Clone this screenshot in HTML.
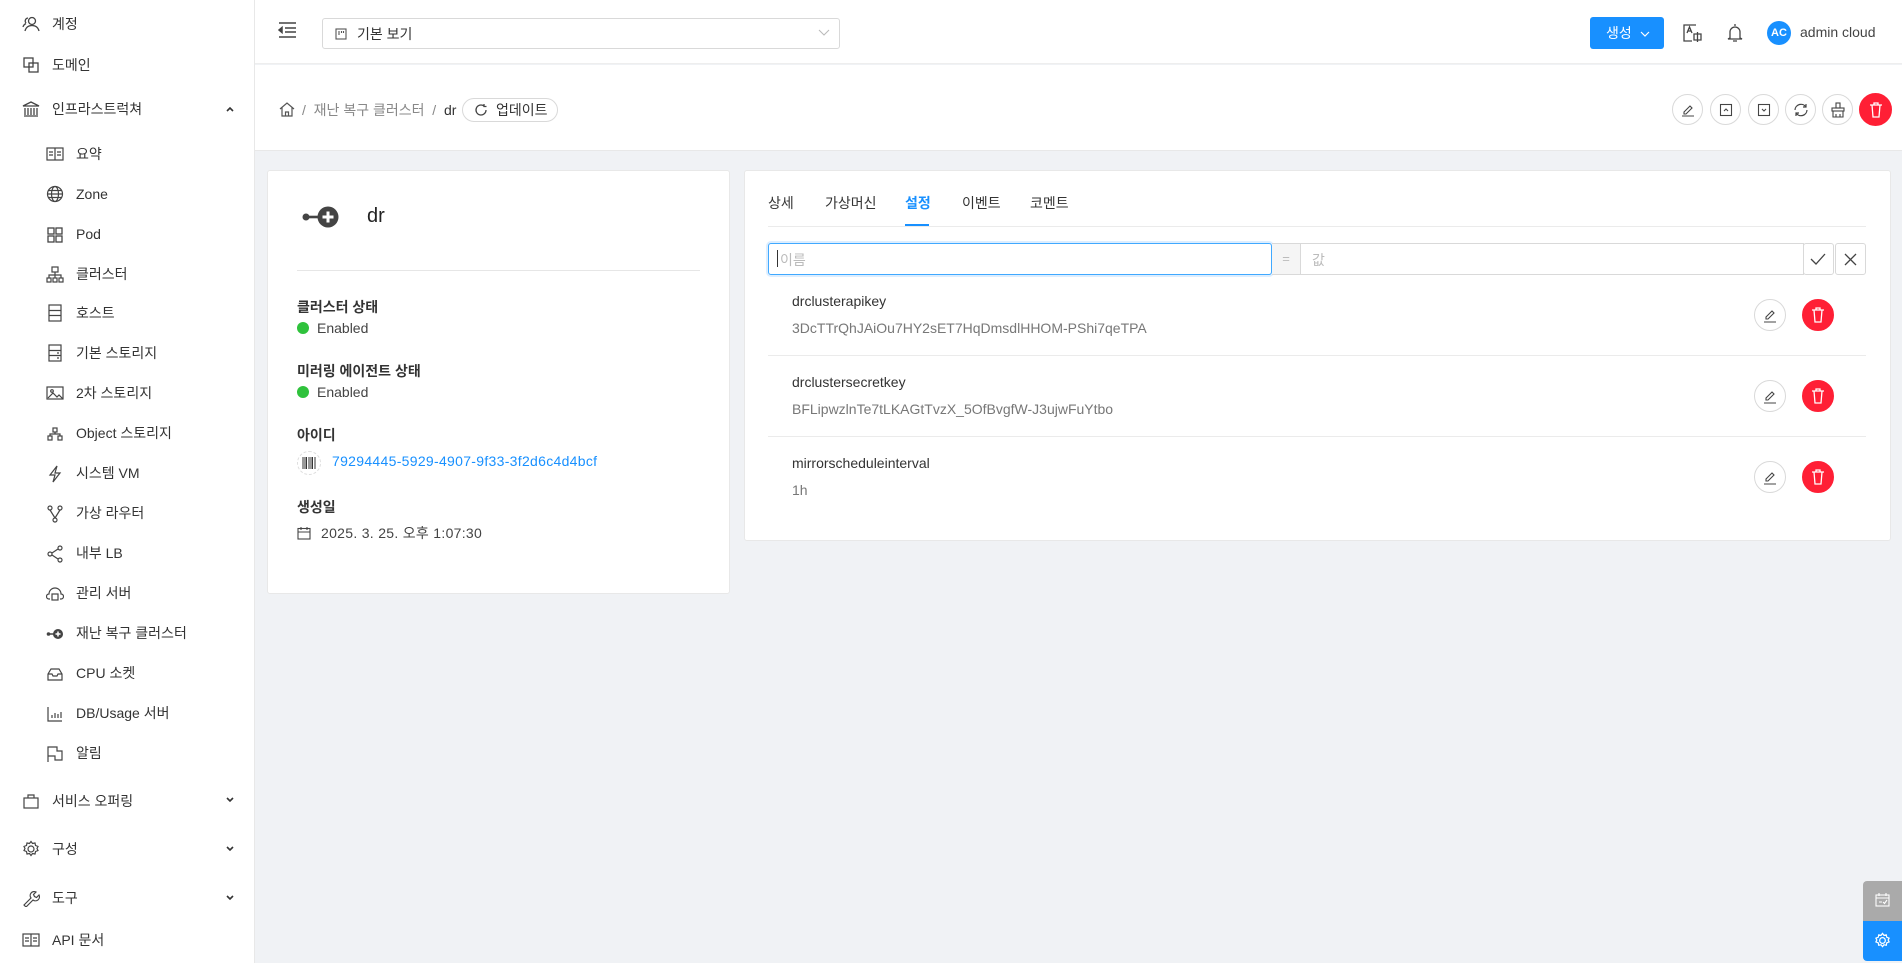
<!DOCTYPE html>
<html><head><meta charset="utf-8"><style>
*{box-sizing:border-box;margin:0;padding:0}
body{width:1902px;height:963px;overflow:hidden;background:#f0f2f5;font-family:"Liberation Sans","Noto Sans CJK KR",sans-serif;color:#333;font-size:14px;position:relative}
.a{position:absolute}
.side{left:0;top:0;width:255px;height:963px;background:#fff;border-right:1px solid #e8e8e8}
.si{position:absolute;font-size:14px;color:#333;white-space:nowrap;line-height:20px}
.si svg{position:absolute;top:1px}
.hdr{left:255px;top:0;width:1647px;height:64px;background:#fff;border-bottom:1px solid #eee}
.bc{left:255px;top:65px;width:1647px;height:86px;background:#fff;border-bottom:1px solid #e8e8e8}
.card{background:#fff;border:1px solid #e8e8e8;border-radius:3px}
.cb{position:absolute;width:31px;height:31px;border-radius:50%;border:1px solid #d9d9d9;background:#fff;display:flex;align-items:center;justify-content:center}
.red{background:#ff1f35;border-color:#ff1f35}
.lbl{position:absolute;left:297px;font-weight:bold;font-size:14px;color:#333}
.dot{display:inline-block;width:12px;height:12px;border-radius:50%;background:#2fc23c;margin-right:8px;vertical-align:-1px}
.tab{position:absolute;top:193px;font-size:14px;color:#333}
.key{position:absolute;left:792px;font-size:14px;color:#333}
.val{position:absolute;left:792px;font-size:14px;color:#777}
.sep{position:absolute;left:768px;width:1098px;height:1px;background:#ebebeb}
</style></head><body>

<div class="a side">
<svg class="a" style="left:22px;top:15px" width="18" height="18" viewBox="0 0 18 18" fill="none" stroke="#444" stroke-width="1.3"><circle cx="10" cy="6" r="3.5"/><path d="M3 16c1-4 4-5.5 7-5.5s6 1.5 7 5.5M6 3a3 3 0 0 0-2 5M1 12c.5-2 2-3 3-3.5"/></svg>
<div class="si" style="left:52px;top:14px">계정</div>
<svg class="a" style="left:22px;top:56px" width="18" height="18" viewBox="0 0 18 18" fill="none" stroke="#444" stroke-width="1.3"><rect x="2" y="2" width="9" height="9"/><rect x="7" y="7" width="9" height="9"/></svg>
<div class="si" style="left:52px;top:55px">도메인</div>
<svg class="a" style="left:22px;top:100px" width="18" height="18" viewBox="0 0 18 18" fill="none" stroke="#444" stroke-width="1.3"><path d="M1 6l8-4 8 4zM2 16h14M3 8v7M6 8v7M9 8v7M12 8v7M15 8v7"/></svg>
<div class="si" style="left:52px;top:99px">인프라스트럭쳐</div>
<svg class="a" style="left:225px;top:105px" width="10" height="8" viewBox="0 0 10 8"><path d="M2 6l3-3 3 3" fill="none" stroke="#333" stroke-width="1.6"/></svg>

<div class="si" style="left:76px;top:144px">요약</div>
<svg class="a" style="left:46px;top:146px" width="18" height="16" viewBox="0 0 18 16" fill="none" stroke="#444" stroke-width="1.2"><rect x="1" y="2" width="16" height="12"/><path d="M9 2v12M3 6h4M3 9h4M11 6h4M11 9h4"/></svg>
<div class="si" style="left:76px;top:184px">Zone</div>
<svg class="a" style="left:46px;top:185px" width="18" height="18" viewBox="0 0 18 18" fill="none" stroke="#444" stroke-width="1.2"><circle cx="9" cy="9" r="7.5"/><ellipse cx="9" cy="9" rx="3.5" ry="7.5"/><path d="M1.5 9h15M2.5 5.5h13M2.5 12.5h13"/></svg>
<div class="si" style="left:76px;top:224px">Pod</div>
<svg class="a" style="left:46px;top:226px" width="18" height="18" viewBox="0 0 18 18" fill="none" stroke="#444" stroke-width="1.3"><rect x="2" y="2" width="6" height="6"/><rect x="10" y="2" width="6" height="6"/><rect x="2" y="10" width="6" height="6"/><rect x="10" y="10" width="6" height="6"/></svg>
<div class="si" style="left:76px;top:264px">클러스터</div>
<svg class="a" style="left:46px;top:266px" width="18" height="18" viewBox="0 0 18 18" fill="none" stroke="#444" stroke-width="1.2"><rect x="6" y="1" width="6" height="5"/><rect x="1" y="12" width="4" height="4"/><rect x="7" y="12" width="4" height="4"/><rect x="13" y="12" width="4" height="4"/><path d="M9 6v6M3 12V9h12v3"/></svg>
<div class="si" style="left:76px;top:303px">호스트</div>
<svg class="a" style="left:46px;top:304px" width="18" height="18" viewBox="0 0 18 18" fill="none" stroke="#444" stroke-width="1.2"><rect x="3" y="1" width="12" height="16"/><path d="M3 6.5h12M3 11.5h12"/></svg>
<div class="si" style="left:76px;top:343px">기본 스토리지</div>
<svg class="a" style="left:46px;top:344px" width="18" height="18" viewBox="0 0 18 18" fill="none" stroke="#444" stroke-width="1.2"><rect x="3" y="1" width="12" height="16"/><path d="M3 6.5h12M3 11.5h12M11 9h2M11 14h2"/></svg>
<div class="si" style="left:76px;top:383px">2차 스토리지</div>
<svg class="a" style="left:46px;top:385px" width="18" height="16" viewBox="0 0 18 16" fill="none" stroke="#444" stroke-width="1.2"><rect x="1" y="2" width="16" height="12"/><path d="M2 13l5-5 4 4 2-2 4 4"/><circle cx="6" cy="6" r="1.3"/></svg>
<div class="si" style="left:76px;top:423px">Object 스토리지</div>
<svg class="a" style="left:46px;top:425px" width="18" height="18" viewBox="0 0 18 18" fill="none" stroke="#444" stroke-width="1.2"><rect x="7" y="3" width="4" height="4"/><rect x="2" y="11" width="4" height="4"/><rect x="12" y="11" width="4" height="4"/><path d="M9 7v2M4 11V9h10v2"/></svg>
<div class="si" style="left:76px;top:463px">시스템 VM</div>
<svg class="a" style="left:46px;top:465px" width="18" height="18" viewBox="0 0 18 18" fill="none" stroke="#444" stroke-width="1.2"><path d="M11 1L4 10h5l-2 7 7-9H9z"/></svg>
<div class="si" style="left:76px;top:503px">가상 라우터</div>
<svg class="a" style="left:46px;top:505px" width="18" height="18" viewBox="0 0 18 18" fill="none" stroke="#444" stroke-width="1.2"><circle cx="4" cy="3" r="2"/><circle cx="14" cy="3" r="2"/><circle cx="9" cy="15" r="2"/><path d="M4 5l5 8M14 5l-5 8"/></svg>
<div class="si" style="left:76px;top:543px">내부 LB</div>
<svg class="a" style="left:46px;top:545px" width="18" height="18" viewBox="0 0 18 18" fill="none" stroke="#444" stroke-width="1.2"><circle cx="4" cy="9" r="2"/><circle cx="14" cy="3" r="2"/><circle cx="14" cy="15" r="2"/><path d="M6 8l6-4M6 10l6 4"/></svg>
<div class="si" style="left:76px;top:583px">관리 서버</div>
<svg class="a" style="left:46px;top:585px" width="18" height="18" viewBox="0 0 18 18" fill="none" stroke="#444" stroke-width="1.2"><path d="M4 14H3a2 2 0 0 1 0-5 6 6 0 0 1 12 0 2 2 0 0 1 0 5h-1"/><rect x="6" y="9" width="6" height="6"/></svg>
<div class="si" style="left:76px;top:623px">재난 복구 클러스터</div>
<svg class="a" style="left:46px;top:626px" width="18" height="16" viewBox="0 0 18 16"><circle cx="2.5" cy="8" r="1.8" fill="#444"/><path d="M3 8h6" stroke="#444" stroke-width="1.5"/><circle cx="12" cy="8" r="5" fill="#444"/><path d="M12 5.5v5M9.5 8h5" stroke="#fff" stroke-width="1.5"/></svg>
<div class="si" style="left:76px;top:663px">CPU 소켓</div>
<svg class="a" style="left:46px;top:665px" width="18" height="18" viewBox="0 0 18 18" fill="none" stroke="#444" stroke-width="1.2"><path d="M2 9l3-5h8l3 5v6H2zM2 9h4l1 2h4l1-2h4"/></svg>
<div class="si" style="left:76px;top:703px">DB/Usage 서버</div>
<svg class="a" style="left:46px;top:705px" width="18" height="18" viewBox="0 0 18 18" fill="none" stroke="#444" stroke-width="1.2"><path d="M2 2v14h14M6 13v-3M9 13V8M12 13v-4M15 13V7"/></svg>
<div class="si" style="left:76px;top:743px">알림</div>
<svg class="a" style="left:46px;top:745px" width="18" height="18" viewBox="0 0 18 18" fill="none" stroke="#444" stroke-width="1.2"><path d="M2 17V2h9v4h5v9h-7v-4H2"/></svg>

<svg class="a" style="left:22px;top:792px" width="18" height="18" viewBox="0 0 18 18" fill="none" stroke="#444" stroke-width="1.2"><rect x="2" y="6" width="14" height="10"/><path d="M6 6V3h6v3"/></svg>
<div class="si" style="left:52px;top:791px">서비스 오퍼링</div>
<svg class="a" style="left:225px;top:796px" width="10" height="8" viewBox="0 0 10 8"><path d="M2 2l3 3 3-3" fill="none" stroke="#333" stroke-width="1.6"/></svg>
<svg class="a" style="left:22px;top:840px" width="18" height="18" viewBox="0 0 18 18" fill="none" stroke="#444" stroke-width="1.2"><circle cx="9" cy="9" r="3"/><path d="M9 1.5l1.5 2 2.5-.5.5 2.5 2.5 1-1 2 1 2-2.5 1-.5 2.5-2.5-.5-1.5 2-1.5-2-2.5.5-.5-2.5-2.5-1 1-2-1-2 2.5-1 .5-2.5 2.5.5z"/></svg>
<div class="si" style="left:52px;top:839px">구성</div>
<svg class="a" style="left:225px;top:845px" width="10" height="8" viewBox="0 0 10 8"><path d="M2 2l3 3 3-3" fill="none" stroke="#333" stroke-width="1.6"/></svg>
<svg class="a" style="left:22px;top:889px" width="18" height="18" viewBox="0 0 18 18" fill="none" stroke="#444" stroke-width="1.2"><path d="M2 16l7-7a4 4 0 0 1 5-6l-2.5 2.5 1 2 2 1L17 6a4 4 0 0 1-6 5l-7 7z"/></svg>
<div class="si" style="left:52px;top:888px">도구</div>
<svg class="a" style="left:225px;top:894px" width="10" height="8" viewBox="0 0 10 8"><path d="M2 2l3 3 3-3" fill="none" stroke="#333" stroke-width="1.6"/></svg>
<svg class="a" style="left:22px;top:932px" width="18" height="16" viewBox="0 0 18 16" fill="none" stroke="#444" stroke-width="1.2"><rect x="1" y="2" width="16" height="12"/><path d="M9 2v12M3 6h4M3 9h4M11 6h4M11 9h4"/></svg>
<div class="si" style="left:52px;top:930px">API 문서</div>
</div>

<div class="a hdr"></div>
<svg class="a" style="left:278px;top:21px" width="19" height="18" viewBox="0 0 19 18" fill="none" stroke="#444" stroke-width="1.5"><path d="M1 2h17M7 7h11M7 11h11M1 16h17"/><path d="M4 6.5L1 9l3 2.5z" fill="#444"/></svg>
<div class="a" style="left:322px;top:18px;width:518px;height:31px;border:1px solid #d9d9d9;border-radius:3px;background:#fff"></div>
<svg class="a" style="left:335px;top:28px" width="12" height="12" viewBox="0 0 12 12" fill="none" stroke="#555" stroke-width="1.1"><rect x="1" y="1" width="10" height="10"/><path d="M4 3v4M6.5 3v2M8.5 3v2"/></svg>
<div class="a" style="left:357px;top:24px;font-size:14px;color:#333">기본 보기</div>
<svg class="a" style="left:818px;top:29px" width="12" height="8" viewBox="0 0 12 8"><path d="M1 1l5 5 5-5" fill="none" stroke="#bbb" stroke-width="1.1"/></svg>
<div class="a" style="left:1590px;top:17px;width:74px;height:32px;background:#1890ff;border-radius:3px;color:#fff;font-size:14px;line-height:32px;padding-left:16px">생성 <svg width="10" height="8" viewBox="0 0 10 8" style="margin-left:4px"><path d="M1 2l4 4 4-4" fill="none" stroke="#fff" stroke-width="1.2"/></svg></div>
<svg class="a" style="left:1683px;top:24px" width="19" height="18" viewBox="0 0 19 18" fill="none" stroke="#444" stroke-width="1.3"><path d="M13 1H1v16h8"/><path d="M4 9l2.5-6L9 9M5 7h3"/><path d="M11 10h7v6h-7zM14.5 8v10"/></svg>
<svg class="a" style="left:1727px;top:23px" width="16" height="20" viewBox="0 0 16 20" fill="none" stroke="#444" stroke-width="1.3"><path d="M8 1v2M3 15V9a5 5 0 0 1 10 0v6l2 1H1zM6 18h4"/></svg>
<div class="a" style="left:1767px;top:21px;width:24px;height:24px;border-radius:50%;background:#1890ff;color:#fff;font-size:11px;font-weight:bold;line-height:24px;text-align:center">AC</div>
<div class="a" style="left:1800px;top:24px;font-size:14px;color:#444">admin cloud</div>

<div class="a bc"></div>
<svg class="a" style="left:279px;top:101px" width="16" height="16" viewBox="0 0 16 16" fill="none" stroke="#555" stroke-width="1.2"><path d="M1 8l7-6 7 6M3 6.5V15h10V6.5M6.5 15v-4h3v4"/></svg>
<div class="a" style="left:302px;top:100px;font-size:14px;color:#888">/&nbsp;&nbsp;재난 복구 클러스터&nbsp;&nbsp;/&nbsp;&nbsp;<span style="color:#333">dr</span></div>
<div class="a" style="left:462px;top:98px;width:96px;height:24px;border:1px solid #d9d9d9;border-radius:12px;font-size:14px;color:#333;line-height:22px;padding-left:33px">업데이트</div>
<svg class="a" style="left:474px;top:103px" width="14" height="14" viewBox="0 0 14 14" fill="none" stroke="#444" stroke-width="1.3"><path d="M12 7a5 5 0 1 1-2-4M10 1v2.5h2.5"/></svg>

<div class="cb" style="left:1672px;top:94px"><svg width="14" height="14" viewBox="0 0 14 14" fill="none" stroke="#444" stroke-width="1.1"><path d="M3 9l6-6 2 2-6 6H3zM1 13h12"/></svg></div>
<div class="cb" style="left:1710px;top:94px"><svg width="14" height="14" viewBox="0 0 14 14" fill="none" stroke="#444" stroke-width="1.1"><rect x="1.5" y="1.5" width="11" height="11"/><path d="M5 8l2-2 2 2"/></svg></div>
<div class="cb" style="left:1748px;top:94px"><svg width="14" height="14" viewBox="0 0 14 14" fill="none" stroke="#444" stroke-width="1.1"><rect x="1.5" y="1.5" width="11" height="11"/><path d="M5 6l2 2 2-2"/></svg></div>
<div class="cb" style="left:1785px;top:94px"><svg width="16" height="16" viewBox="0 0 16 16" fill="none" stroke="#444" stroke-width="1.2"><path d="M2 8a6 6 0 0 1 11-3M14 8a6 6 0 0 1-11 3M13 2v3h-3M3 14v-3h3"/></svg></div>
<div class="cb" style="left:1822px;top:94px"><svg width="16" height="16" viewBox="0 0 16 16" fill="none" stroke="#444" stroke-width="1.1"><rect x="6" y="1" width="4" height="5"/><rect x="2" y="6" width="12" height="3"/><path d="M3 9v6h10V9M6 12v3M10 12v3"/></svg></div>
<div class="cb red" style="left:1859px;top:93px;width:33px;height:33px"><svg width="14" height="16" viewBox="0 0 14 16" fill="none" stroke="#fff" stroke-width="1.3"><path d="M1 3h12M5 3V1h4v2M3 3l1 12h6l1-12"/></svg></div>

<div class="a card" style="left:267px;top:170px;width:463px;height:424px"></div>
<svg class="a" style="left:302px;top:205px" width="38" height="24" viewBox="0 0 38 24"><circle cx="4" cy="12" r="3.5" fill="#444"/><path d="M5 12h14" stroke="#444" stroke-width="2.6"/><circle cx="26" cy="12" r="10.5" fill="#444"/><path d="M26 6.5v11M20.5 12h11" stroke="#fff" stroke-width="3"/></svg>
<div class="a" style="left:367px;top:205px;font-size:20px;color:#222">dr</div>
<div class="a" style="left:297px;top:270px;width:403px;height:1px;background:#e6e6e6"></div>
<div class="lbl" style="top:297px">클러스터 상태</div>
<div class="a" style="left:297px;top:320px;font-size:14px;color:#444"><span class="dot"></span>Enabled</div>
<div class="lbl" style="top:361px">미러링 에이전트 상태</div>
<div class="a" style="left:297px;top:384px;font-size:14px;color:#444"><span class="dot"></span>Enabled</div>
<div class="lbl" style="top:425px">아이디</div>
<div class="a" style="left:297px;top:451px;width:24px;height:24px;border-radius:50%;border:1px dashed #ddd"></div>
<svg class="a" style="left:302px;top:457px" width="14" height="12" viewBox="0 0 14 12" stroke="#333"><path d="M1 0v12M3 0v12M4.5 0v12M7 0v12M9 0v12M10.5 0v12M13 0v12" stroke-width="1"/></svg>
<div class="a" style="left:332px;top:453px;font-size:14px;color:#1890ff;letter-spacing:.3px">79294445-5929-4907-9f33-3f2d6c4d4bcf</div>
<div class="lbl" style="top:497px">생성일</div>
<svg class="a" style="left:297px;top:526px" width="14" height="14" viewBox="0 0 14 14" fill="none" stroke="#444" stroke-width="1.1"><rect x="1" y="2.5" width="12" height="10.5"/><path d="M1 6h12M4 1v3M10 1v3"/></svg>
<div class="a" style="left:321px;top:523px;font-size:14px;color:#444;letter-spacing:.3px">2025. 3. 25. 오후 1:07:30</div>

<div class="a card" style="left:744px;top:170px;width:1147px;height:371px"></div>
<div class="tab" style="left:768px">상세</div>
<div class="tab" style="left:825px">가상머신</div>
<div class="tab" style="left:905px;color:#1890ff;font-weight:bold">설정</div>
<div class="tab" style="left:962px">이벤트</div>
<div class="tab" style="left:1030px">코멘트</div>
<div class="sep" style="top:226px"></div>
<div class="a" style="left:905px;top:224px;width:24px;height:2px;background:#1890ff"></div>

<div class="a" style="left:768px;top:243px;width:504px;height:32px;border:1px solid #40a9ff;border-radius:3px;box-shadow:0 0 0 2px rgba(24,144,255,.15);background:#fff"></div>
<div class="a" style="left:777px;top:250px;width:1px;height:17px;background:#333"></div>
<div class="a" style="left:780px;top:250px;font-size:14px;color:#bbb">이름</div>
<div class="a" style="left:1272px;top:243px;width:28px;height:32px;background:#f5f5f5;border-top:1px solid #d9d9d9;border-bottom:1px solid #d9d9d9;color:#bbb;text-align:center;line-height:30px;font-size:13px">=</div>
<div class="a" style="left:1300px;top:243px;width:504px;height:32px;border:1px solid #d9d9d9;background:#fff"></div>
<div class="a" style="left:1312px;top:250px;font-size:14px;color:#bbb">값</div>
<div class="a" style="left:1803px;top:243px;width:31px;height:32px;border:1px solid #d9d9d9;border-radius:3px;background:#fff"></div>
<svg class="a" style="left:1810px;top:252px" width="16" height="14" viewBox="0 0 16 14"><path d="M1 7l5 5 9-10" fill="none" stroke="#444" stroke-width="1.3"/></svg>
<div class="a" style="left:1835px;top:243px;width:31px;height:32px;border:1px solid #d9d9d9;border-radius:3px;background:#fff"></div>
<svg class="a" style="left:1844px;top:253px" width="13" height="13" viewBox="0 0 13 13"><path d="M1 1l11 11M12 1L1 12" stroke="#444" stroke-width="1.3"/></svg>

<div class="key" style="top:293px">drclusterapikey</div>
<div class="val" style="top:320px">3DcTTrQhJAiOu7HY2sET7HqDmsdlHHOM-PShi7qeTPA</div>
<div class="sep" style="top:355px"></div>
<div class="key" style="top:374px">drclustersecretkey</div>
<div class="val" style="top:401px">BFLipwzlnTe7tLKAGtTvzX_5OfBvgfW-J3ujwFuYtbo</div>
<div class="sep" style="top:436px"></div>
<div class="key" style="top:455px">mirrorscheduleinterval</div>
<div class="val" style="top:482px">1h</div>

<div class="cb" style="left:1754px;top:299px;width:32px;height:32px"><svg width="16" height="16" viewBox="0 0 16 16" fill="none" stroke="#444" stroke-width="1.1"><path d="M4 10l6-6 2 2-6 6H4zM2 15h12"/></svg></div>
<div class="cb red" style="left:1802px;top:299px;width:32px;height:32px"><svg width="14" height="16" viewBox="0 0 14 16" fill="none" stroke="#fff" stroke-width="1.3"><path d="M1 3h12M5 3V1h4v2M3 3l1 12h6l1-12"/></svg></div>
<div class="cb" style="left:1754px;top:380px;width:32px;height:32px"><svg width="16" height="16" viewBox="0 0 16 16" fill="none" stroke="#444" stroke-width="1.1"><path d="M4 10l6-6 2 2-6 6H4zM2 15h12"/></svg></div>
<div class="cb red" style="left:1802px;top:380px;width:32px;height:32px"><svg width="14" height="16" viewBox="0 0 14 16" fill="none" stroke="#fff" stroke-width="1.3"><path d="M1 3h12M5 3V1h4v2M3 3l1 12h6l1-12"/></svg></div>
<div class="cb" style="left:1754px;top:461px;width:32px;height:32px"><svg width="16" height="16" viewBox="0 0 16 16" fill="none" stroke="#444" stroke-width="1.1"><path d="M4 10l6-6 2 2-6 6H4zM2 15h12"/></svg></div>
<div class="cb red" style="left:1802px;top:461px;width:32px;height:32px"><svg width="14" height="16" viewBox="0 0 14 16" fill="none" stroke="#fff" stroke-width="1.3"><path d="M1 3h12M5 3V1h4v2M3 3l1 12h6l1-12"/></svg></div>

<div class="a" style="left:1863px;top:881px;width:39px;height:40px;background:#aaa;border-radius:4px 0 0 0"></div>
<svg class="a" style="left:1875px;top:893px" width="15" height="14" viewBox="0 0 15 14" fill="none" stroke="#fff" stroke-width="1.1"><rect x="1" y="2" width="13" height="11"/><path d="M1 5h13M4 0v3M11 0v3M4 9h3M8 9l1.5 1.5L12 7"/></svg>
<div class="a" style="left:1863px;top:921px;width:39px;height:40px;background:#1890ff;border-radius:0 0 0 4px"></div>
<svg class="a" style="left:1874px;top:932px" width="17" height="17" viewBox="0 0 18 18" fill="none" stroke="#fff" stroke-width="1.3"><circle cx="9" cy="9" r="3"/><path d="M9 1.5l1.5 2 2.5-.5.5 2.5 2.5 1-1 2 1 2-2.5 1-.5 2.5-2.5-.5-1.5 2-1.5-2-2.5.5-.5-2.5-2.5-1 1-2-1-2 2.5-1 .5-2.5 2.5.5z"/></svg>
</body></html>
